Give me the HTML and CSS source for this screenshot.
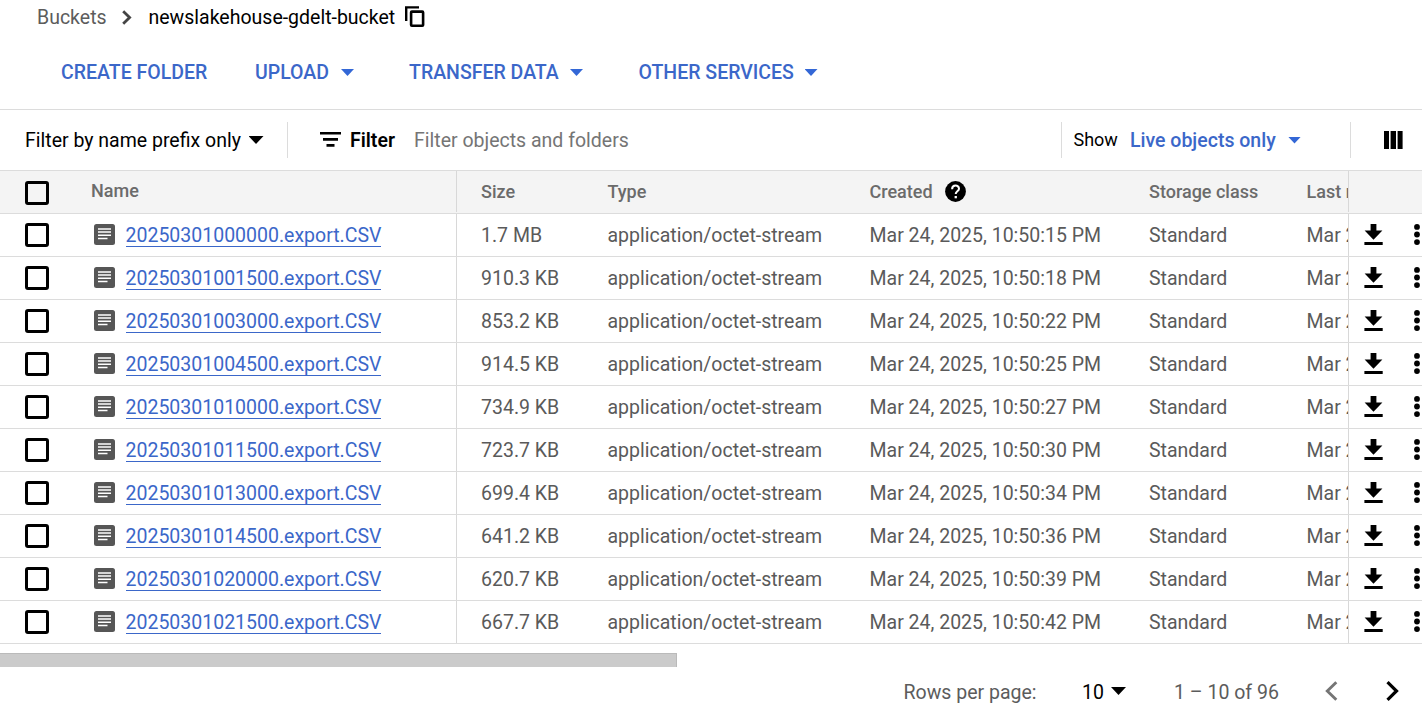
FILE: index.html
```html
<!DOCTYPE html>
<html lang="en">
<head>
<meta charset="utf-8">
<title>newslakehouse-gdelt-bucket</title>
<link rel="stylesheet" href="styles.css">
</head>
<body>
<svg class="defs" aria-hidden="true">
  <symbol id="doc" viewBox="0 0 21 21"><rect width="21" height="21" rx="2.5" fill="#565656"/><path d="M4 4.9h13M4 8.1h13M4 11.3h13M4 14.5h9.5" stroke="#fff" stroke-width="1.5"/></symbol>
  <symbol id="download" viewBox="0 0 20 22"><path d="M6.6 0h5.8v6.4h6L9.5 15.8.6 6.4h6zM.4 18h18.3v3H.4z"/></symbol>
  <symbol id="dots" viewBox="0 0 6 22"><circle cx="3" cy="2.9" r="2.9"/><circle cx="3" cy="10.5" r="2.9"/><circle cx="3" cy="18.1" r="2.9"/></symbol>
</svg>
<nav class="breadcrumb">
  <span class="crumb">Buckets</span>
  <svg class="crumb-arrow" viewBox="0 0 10 15"><path d="M1.2 1.2L7.6 7.5 1.2 13.8" fill="none" stroke="#444" stroke-width="2.8"/></svg>
  <span class="current">newslakehouse-gdelt-bucket</span>
  <svg class="copy" viewBox="0 0 20 22"><path d="M1.2 15V1.4H14" fill="none" stroke="#000" stroke-width="2.4"/><rect x="6.1" y="5.6" width="12" height="14.2" rx="0.8" fill="none" stroke="#000" stroke-width="2.6"/></svg>
</nav>
<div class="actions">
  <span class="action create">CREATE FOLDER</span>
  <span class="action upload">UPLOAD<i class="caret blue"></i></span>
  <span class="action transfer">TRANSFER DATA<i class="caret blue"></i></span>
  <span class="action other">OTHER SERVICES<i class="caret blue"></i></span>
</div>
<div class="filterbar">
  <div class="prefix"><span>Filter by name prefix only</span><i class="caret"></i></div>
  <div class="filter">
    <svg class="filter-icon" viewBox="0 0 21 15"><path d="M0 0h21v2.6H0zM3 6h15v2.7H3zM6.5 12.1h8v2.7h-8z"/></svg>
    <b>Filter</b><span class="placeholder">Filter objects and folders</span>
  </div>
  <div class="show"><span class="show-label">Show</span><span class="live">Live objects only</span><i class="caret blue"></i></div>
  <div class="columns"><svg viewBox="0 0 19 18"><path d="M0 0h5v18H0zM6.6 0h5.4v18H6.6zM13.6 0h5v18h-5z"/></svg></div>
</div>
<main class="table">
  <div class="row head">
    <div class="name"><i class="box"></i><span class="name-title">Name</span></div>
    <div class="cells"><span>Size</span><span>Type</span><span class="created">Created<svg class="help" viewBox="0 0 21 21"><circle cx="10.5" cy="10.5" r="10.4"/><path d="M7.1 8.2C7.1 3.4 14 3.6 14 7.7c0 2.5-3.3 2.8-3.3 5.3" fill="none" stroke="#fff" stroke-width="2"/><rect x="9.6" y="15" width="2.3" height="2.3" fill="#fff"/></svg></span><span>Storage class</span><span>Last modified</span></div>
    <div class="tools"></div>
  </div>
  <div class="row"><div class="name"><i class="box"></i><svg class="doc"><use href="#doc"/></svg><a>20250301000000.export.CSV</a></div><div class="cells"><span>1.7 MB</span><span>application/octet-stream</span><span>Mar 24, 2025, 10:50:15 PM</span><span>Standard</span><span>Mar 24, 2025</span></div><div class="tools"><svg class="download"><use href="#download"/></svg><svg class="dots"><use href="#dots"/></svg></div></div>
  <div class="row"><div class="name"><i class="box"></i><svg class="doc"><use href="#doc"/></svg><a>20250301001500.export.CSV</a></div><div class="cells"><span>910.3 KB</span><span>application/octet-stream</span><span>Mar 24, 2025, 10:50:18 PM</span><span>Standard</span><span>Mar 24, 2025</span></div><div class="tools"><svg class="download"><use href="#download"/></svg><svg class="dots"><use href="#dots"/></svg></div></div>
  <div class="row"><div class="name"><i class="box"></i><svg class="doc"><use href="#doc"/></svg><a>20250301003000.export.CSV</a></div><div class="cells"><span>853.2 KB</span><span>application/octet-stream</span><span>Mar 24, 2025, 10:50:22 PM</span><span>Standard</span><span>Mar 24, 2025</span></div><div class="tools"><svg class="download"><use href="#download"/></svg><svg class="dots"><use href="#dots"/></svg></div></div>
  <div class="row"><div class="name"><i class="box"></i><svg class="doc"><use href="#doc"/></svg><a>20250301004500.export.CSV</a></div><div class="cells"><span>914.5 KB</span><span>application/octet-stream</span><span>Mar 24, 2025, 10:50:25 PM</span><span>Standard</span><span>Mar 24, 2025</span></div><div class="tools"><svg class="download"><use href="#download"/></svg><svg class="dots"><use href="#dots"/></svg></div></div>
  <div class="row"><div class="name"><i class="box"></i><svg class="doc"><use href="#doc"/></svg><a>20250301010000.export.CSV</a></div><div class="cells"><span>734.9 KB</span><span>application/octet-stream</span><span>Mar 24, 2025, 10:50:27 PM</span><span>Standard</span><span>Mar 24, 2025</span></div><div class="tools"><svg class="download"><use href="#download"/></svg><svg class="dots"><use href="#dots"/></svg></div></div>
  <div class="row"><div class="name"><i class="box"></i><svg class="doc"><use href="#doc"/></svg><a>20250301011500.export.CSV</a></div><div class="cells"><span>723.7 KB</span><span>application/octet-stream</span><span>Mar 24, 2025, 10:50:30 PM</span><span>Standard</span><span>Mar 24, 2025</span></div><div class="tools"><svg class="download"><use href="#download"/></svg><svg class="dots"><use href="#dots"/></svg></div></div>
  <div class="row"><div class="name"><i class="box"></i><svg class="doc"><use href="#doc"/></svg><a>20250301013000.export.CSV</a></div><div class="cells"><span>699.4 KB</span><span>application/octet-stream</span><span>Mar 24, 2025, 10:50:34 PM</span><span>Standard</span><span>Mar 24, 2025</span></div><div class="tools"><svg class="download"><use href="#download"/></svg><svg class="dots"><use href="#dots"/></svg></div></div>
  <div class="row"><div class="name"><i class="box"></i><svg class="doc"><use href="#doc"/></svg><a>20250301014500.export.CSV</a></div><div class="cells"><span>641.2 KB</span><span>application/octet-stream</span><span>Mar 24, 2025, 10:50:36 PM</span><span>Standard</span><span>Mar 24, 2025</span></div><div class="tools"><svg class="download"><use href="#download"/></svg><svg class="dots"><use href="#dots"/></svg></div></div>
  <div class="row"><div class="name"><i class="box"></i><svg class="doc"><use href="#doc"/></svg><a>20250301020000.export.CSV</a></div><div class="cells"><span>620.7 KB</span><span>application/octet-stream</span><span>Mar 24, 2025, 10:50:39 PM</span><span>Standard</span><span>Mar 24, 2025</span></div><div class="tools"><svg class="download"><use href="#download"/></svg><svg class="dots"><use href="#dots"/></svg></div></div>
  <div class="row"><div class="name"><i class="box"></i><svg class="doc"><use href="#doc"/></svg><a>20250301021500.export.CSV</a></div><div class="cells"><span>667.7 KB</span><span>application/octet-stream</span><span>Mar 24, 2025, 10:50:42 PM</span><span>Standard</span><span>Mar 24, 2025</span></div><div class="tools"><svg class="download"><use href="#download"/></svg><svg class="dots"><use href="#dots"/></svg></div></div>
</main>
<div class="scrollbar"></div>
<footer class="pager">
  <span class="label">Rows per page:</span>
  <span class="size">10</span><i class="caret"></i>
  <span class="range">1 – 10 of 96</span>
  <svg class="prev" viewBox="0 0 13 20"><path d="M11.3 1.2L2.3 10l9 8.8" fill="none" stroke="#757575" stroke-width="2.9"/></svg>
  <svg class="next" viewBox="0 0 13 20"><path d="M1.5 1.2l9 8.8-9 8.8" fill="none" stroke="#000" stroke-width="3.2"/></svg>
</footer>
</body>
</html>
```
FILE: styles.css
```css
* { box-sizing: border-box; }
body {
  margin: 0;
  width: 1422px;
  height: 709px;
  overflow: hidden;
  background: #fff;
  font: 19.5px/24px Roboto, sans-serif;
  color: #000;
  white-space: nowrap;
}
svg { display: block; flex: none; }
.defs { display: none; }
.breadcrumb { display: flex; align-items: center; height: 34px; padding-left: 37px; }
.breadcrumb span { padding-top: 2px; }
.crumb { width: 84.5px; color: #5c5c5c; }
.crumb-arrow { width: 10px; height: 15px; }
.current { width: 256px; margin-left: 17px; }
.copy { width: 20px; height: 22px; }

.caret {
  flex: none;
  width: 15px;
  height: 8px;
  background: #000;
  clip-path: polygon(0 0, 100% 0, 50% 100%);
}
.caret.blue { width: 13px; height: 7px; background: #3367d6; }

.actions {
  display: flex;
  align-items: center;
  height: 76px;
  padding: 2px 0 0 61px;
  border-bottom: 1px solid #dcdcdc;
  color: #3b67c9;
  font-weight: 500;
}
.action { display: flex; align-items: center; justify-content: space-between; }
.create { width: 147px; }
.upload { width: 99px; margin-left: 47px; }
.transfer { width: 174px; margin-left: 55px; }
.other { width: 179px; margin-left: 55.5px; }

.filterbar { display: flex; align-items: center; height: 60px; }
.filterbar span, .filterbar b { padding-top: 2px; }
.prefix { display: flex; align-items: center; width: 288px; height: 36px; padding-left: 25px; border-right: 1px solid #dcdcdc; }
.prefix span { width: 223.5px; }
.filter { display: flex; align-items: center; width: 773px; padding-left: 32px; }
.filter-icon { width: 21px; height: 15px; margin-bottom: 1px; }
.filter b { width: 64px; margin-left: 9px; font-weight: 600; }
.placeholder { color: #757575; }
.show { display: flex; align-items: center; width: 290px; height: 36px; padding-left: 11.5px; border-left: 1px solid #dcdcdc; border-right: 1px solid #dcdcdc; }
.filterbar .show-label { width: 56.5px; padding-top: 0; font-size: 18px; }
.live { width: 158px; color: #3b67c9; font-weight: 500; }
.columns { padding-left: 33px; }
.columns svg { width: 19px; height: 18px; }

.row { display: flex; height: 43px; border-bottom: 1px solid #dcdcdc; }
.head { height: 44px; border-top: 1px solid #dcdcdc; background: #f4f4f4; color: #6b6b6b; font-size: 18px; font-weight: 500; }
.name { display: flex; align-items: center; width: 457px; padding-left: 25px; border-right: 1px solid #d8d8d8; }
.head .name { height: 41px; }
.box { flex: none; width: 24px; height: 24px; border: 3px solid #000; border-radius: 3px; }
.head .box { margin-top: 2px; }
.name-title { margin-left: 42px; padding-bottom: 2px; }
.doc { width: 21px; height: 21px; margin: 0 10.5px 1px 45px; }
.name a { height: 23px; line-height: 23px; border-bottom: 1px solid #3b67c9; color: #3b67c9; }
.cells {
  display: grid;
  grid-template-columns: 126.5px 262px 279.5px 157.5px 120px;
  align-items: center;
  width: 891px;
  padding: 2px 0 0 24px;
  overflow: hidden;
  color: #5a5a5a;
}
.head .cells { padding-top: 0; color: #6b6b6b; }
.created { display: flex; align-items: center; }
.help { width: 21px; height: 21px; margin: 0 0 1px 12.5px; }
.tools { display: flex; align-items: center; width: 74px; padding-left: 15px; border-left: 1px solid #d8d8d8; }
.head .tools { height: 41px; }
.download { width: 20px; height: 22px; }
.dots { width: 6px; height: 22px; margin-left: 30px; }

.scrollbar { width: 677px; height: 14px; margin-top: 9px; background: #cbcbcb; border: 1px solid #bababa; border-width: 1px 1px 0 0; }
.pager { display: flex; align-items: center; height: 48px; padding-left: 903.5px; color: #5c5c5c; }
.pager span { padding-top: 3px; }
.label { width: 178.5px; }
.size { width: 29px; color: #000; }
.range { width: 151px; margin-left: 48px; }
.prev, .next { width: 13px; height: 20px; }
.next { margin-left: 48px; }
```
